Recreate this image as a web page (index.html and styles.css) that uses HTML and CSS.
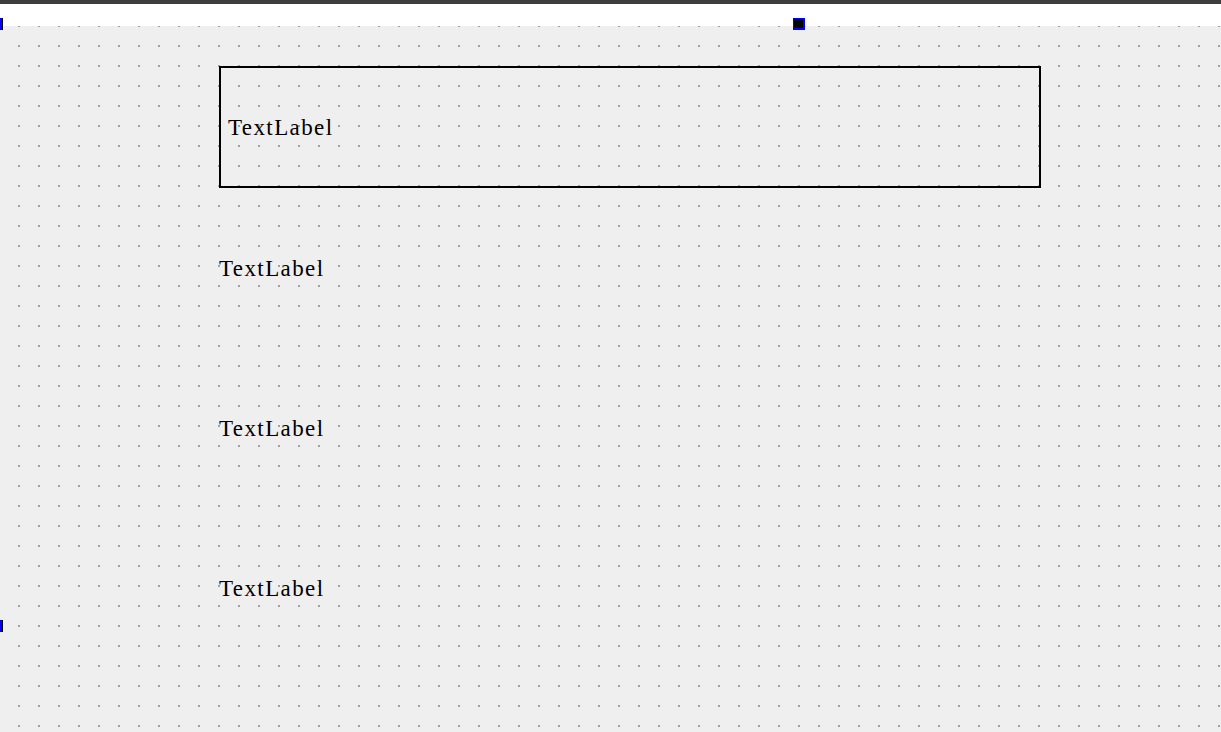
FILE: index.html
```html
<!DOCTYPE html>
<html>
<head>
<meta charset="utf-8">
<link rel="stylesheet" href="styles.css">
</head>
<body>
<div class="topbar"></div>
<div class="strip"></div>
<div class="canvas">
  <div class="labels">
    <div class="label boxed"><span>TextLabel</span></div>
    <div class="label row r2"><span>TextLabel</span></div>
    <div class="label row r3"><span>TextLabel</span></div>
    <div class="label row r4"><span>TextLabel</span></div>
  </div>
</div>
<div class="handle h-top"></div>
<div class="handle-edge h-left-top"></div>
<div class="handle-edge h-left-mid"></div>
</body>
</html>
```

FILE: styles.css
```css
html, body {
  margin: 0;
  padding: 0;
  width: 1221px;
  height: 732px;
  overflow: hidden;
  background: #ffffff;
}
body {
  position: relative;
  font-family: "Liberation Serif", "Noto Sans CJK SC", serif;
}
.topbar {
  height: 4px;
  background: #3d3d3d;
}
.strip {
  height: 22px;
  background: #ffffff;
}
.canvas {
  height: 706px;
  background-color: #efefef;
  background-image:
    linear-gradient(to right, #efefef 18px, transparent 18px),
    linear-gradient(to bottom, #efefef 18px, #a0a0a0 18px);
  background-size: 20px 20px, 20px 20px;
  background-position: 0 1px, 0 1px;
  padding: 40px 0 0 219px;
  box-sizing: border-box;
}
.labels {
  display: flex;
  flex-direction: column;
  align-items: flex-start;
}
.label span {
  font-size: 23px;
  letter-spacing: 1.4px;
  color: #000;
  line-height: 40px;
  white-space: nowrap;
}
.boxed {
  width: 822px;
  height: 122px;
  box-sizing: border-box;
  border: 2px solid #000;
  display: flex;
  align-items: center;
  padding: 2px 0 0 7px;
}
.row {
  height: 40px;
  box-sizing: border-box;
  display: flex;
  align-items: center;
  padding-top: 2px;
}
.r2 { margin-top: 60px; }
.r3 { margin-top: 120px; }
.r4 { margin-top: 120px; }
.handle {
  position: absolute;
  width: 9px;
  height: 9px;
  background: #000;
  border-style: solid;
  border-color: #0000ff;
  border-width: 1px 2px 2px 1px;
}
.h-top { left: 793px; top: 18px; }
.handle-edge {
  position: absolute;
  left: 0;
  width: 2px;
  height: 12px;
  background: #0000ff;
  border-right: 1px solid #000;
}
.h-left-top { top: 18px; }
.h-left-mid { top: 620px; }
```
